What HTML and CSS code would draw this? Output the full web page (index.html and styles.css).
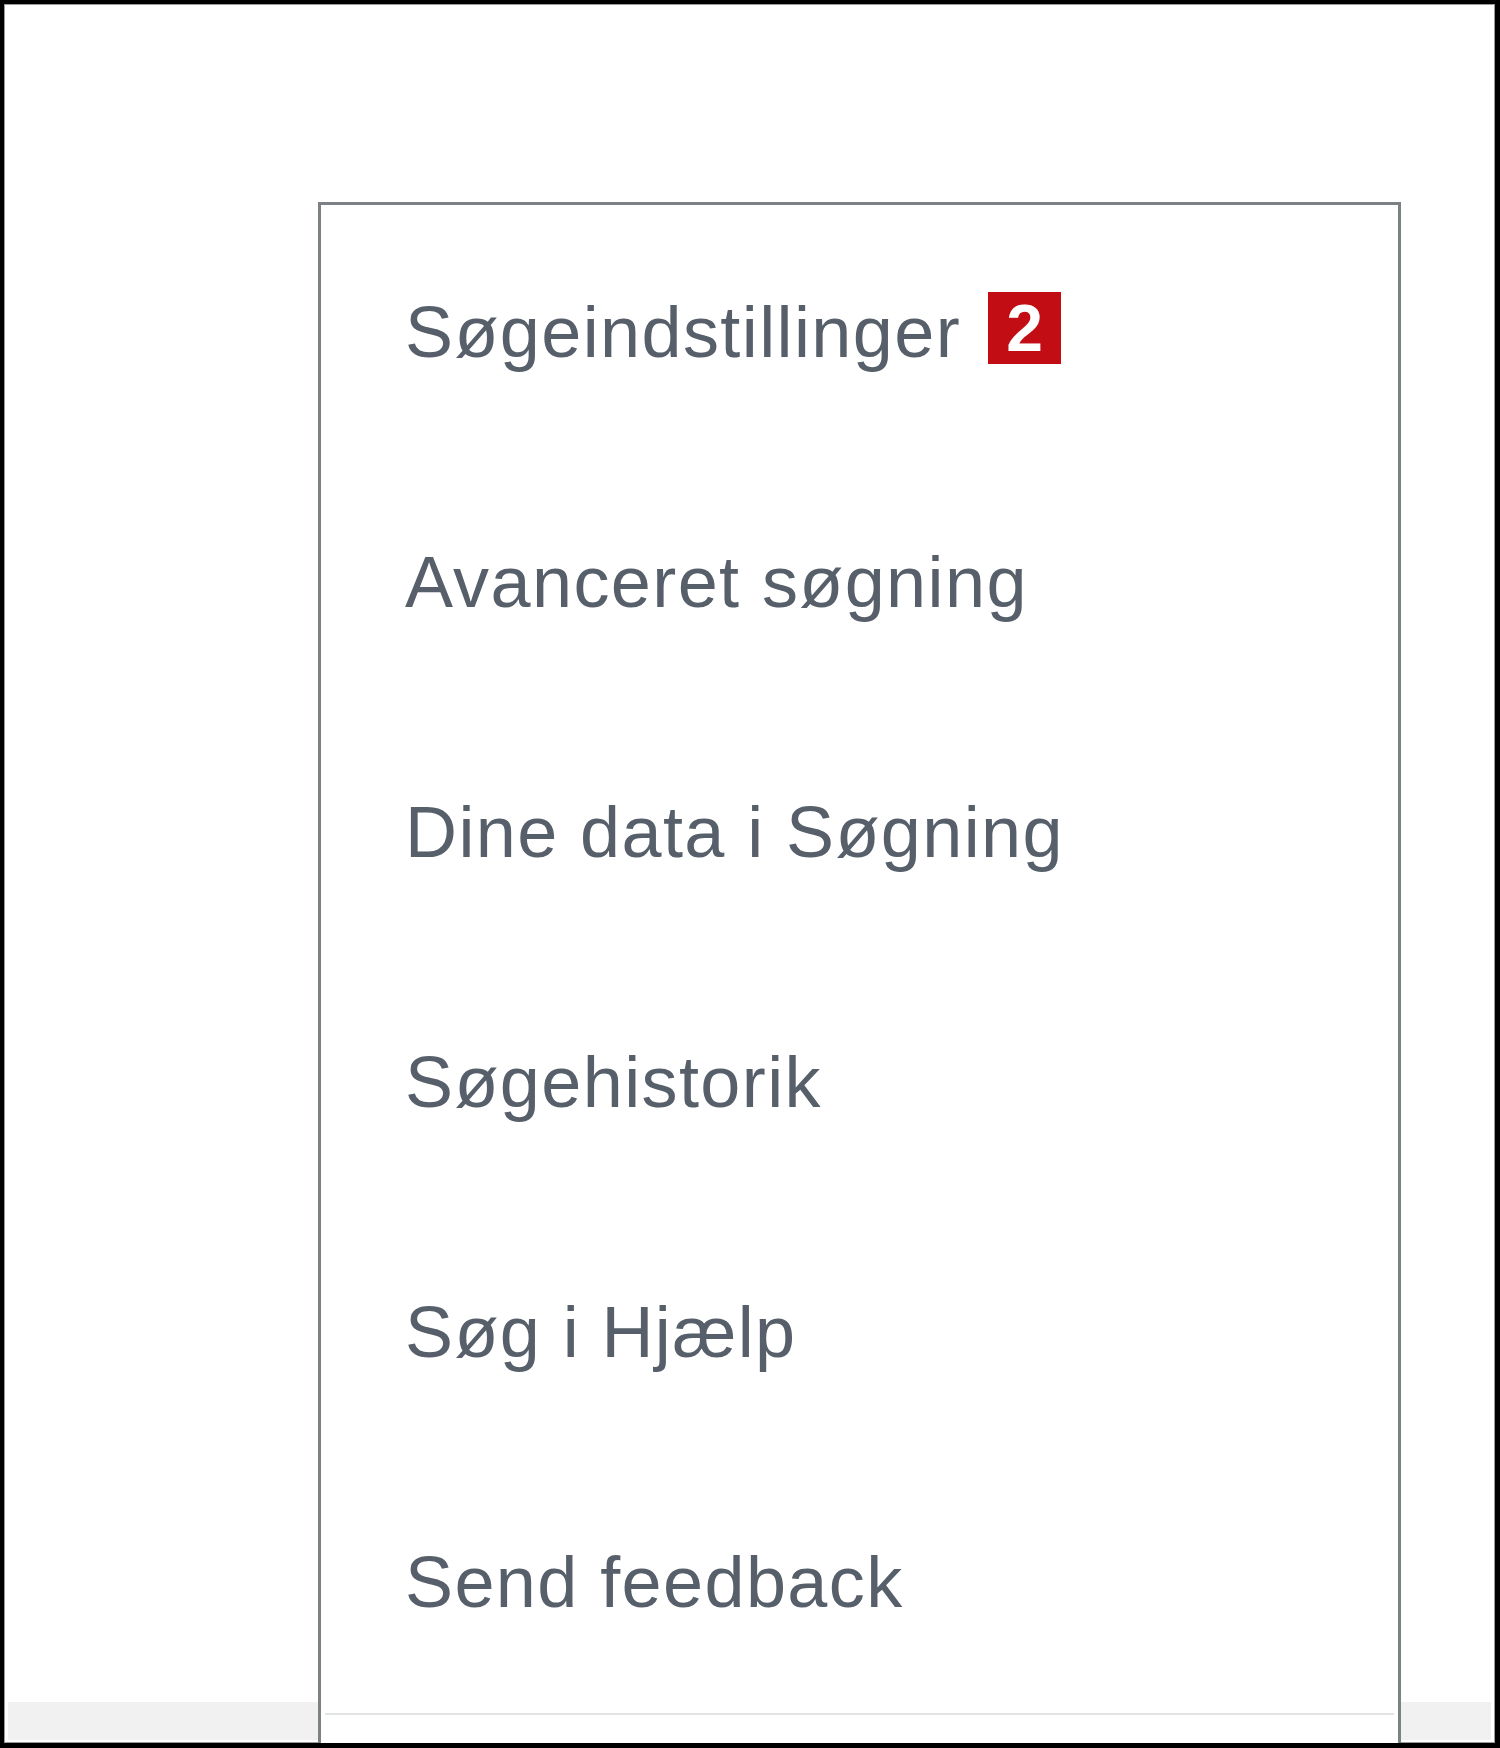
FILE: index.html
```
<!DOCTYPE html>
<html lang="da">
<head>
<meta charset="utf-8">
<title>Søgeindstillinger</title>
<link rel="stylesheet" href="styles.css">
</head>
<body>
<div class="frame">
  <div class="page">
    <div class="page-body"></div>
    <div class="page-footer"></div>
  </div>
  <div class="menu">
    <ul class="menu-list">
      <li class="menu-item"><span class="label">Søgeindstillinger</span><span class="badge">2</span></li>
      <li class="menu-item"><span class="label">Avanceret søgning</span></li>
      <li class="menu-item"><span class="label">Dine data i Søgning</span></li>
      <li class="menu-item"><span class="label">Søgehistorik</span></li>
      <li class="menu-item"><span class="label">Søg i Hjælp</span></li>
      <li class="menu-item"><span class="label">Send feedback</span></li>
    </ul>
    <div class="menu-sep"></div>
  </div>
</div>
</body>
</html>
```

FILE: styles.css
```
html, body {
  margin: 0;
  padding: 0;
  background: #000;
}

.frame {
  position: relative;
  width: 1500px;
  height: 1748px;
  box-sizing: border-box;
  border-style: solid;
  border-color: #000;
  border-width: 4px 5px 5px 4px;
  background: #fff;
  overflow: hidden;
  font-family: "Liberation Sans", Arial, sans-serif;
}

.page {
  display: flex;
  flex-direction: column;
  height: 100%;
  box-shadow: inset 1px 1px 0 #9a9a9a, inset -1px -1px 0 #9a9a9a;
}

.page-body {
  flex: 1;
}

.page-footer {
  height: 38px;
  margin: 0 4px 3px 4px;
  background: #f1f1f1;
}

.menu {
  position: absolute;
  left: 314px;
  top: 198px;
  width: 1077px;
  height: 1600px;
  background: #fff;
  border: 3px solid #7c8283;
  border-bottom: none;
}

.menu-list {
  list-style: none;
  margin: 0;
  padding: 2px 0 0 0;
}

.menu-item {
  display: flex;
  align-items: center;
  height: 250px;
  padding-left: 84px;
  color: #57606a;
  font-size: 72px;
  line-height: 250px;
  letter-spacing: 1.4px;
}

.badge {
  display: inline-flex;
  align-items: center;
  justify-content: center;
  width: 73px;
  height: 72px;
  margin-left: 27px;
  margin-top: -8px;
  background: #c20d14;
  color: #fff;
  font-weight: bold;
  font-size: 66px;
  line-height: 1;
  letter-spacing: 0;
}

.menu-sep {
  margin: 6px 4px 0 4px;
  height: 2px;
  background: #e3e5e5;
}
```
